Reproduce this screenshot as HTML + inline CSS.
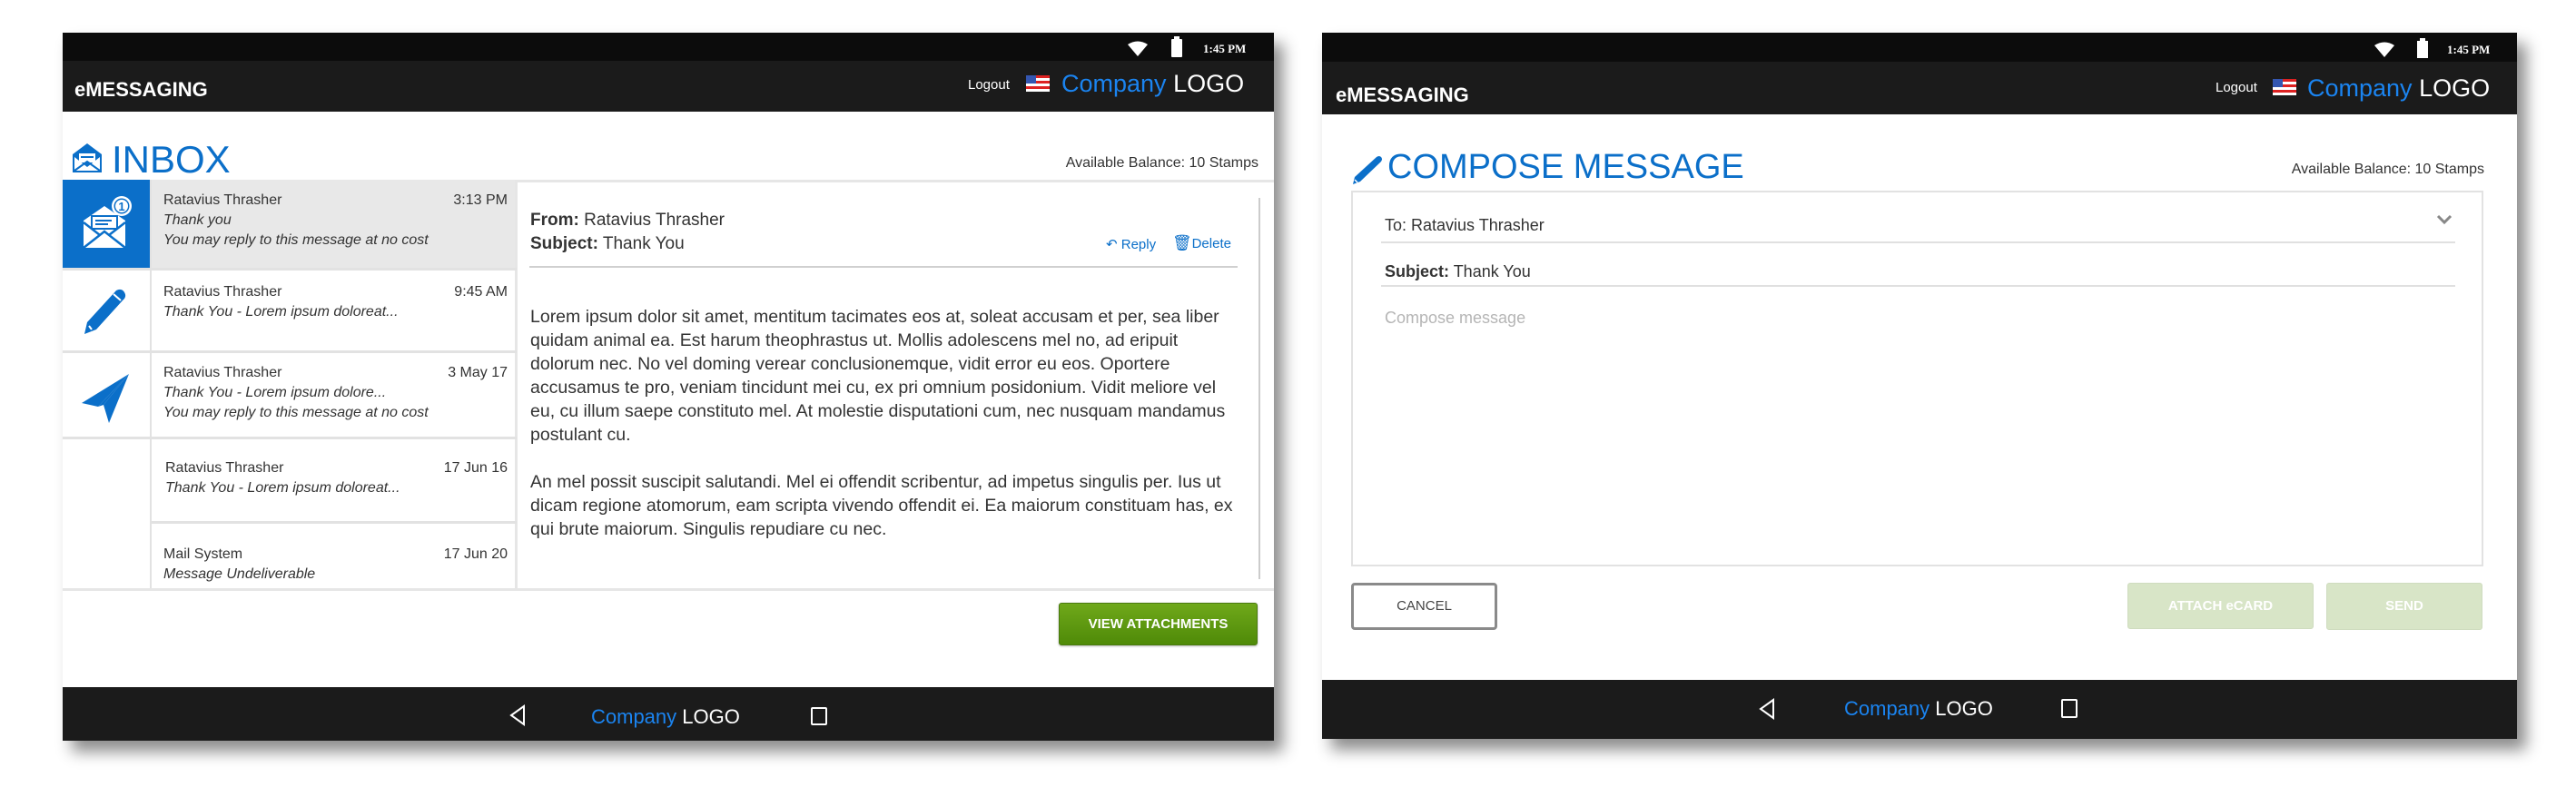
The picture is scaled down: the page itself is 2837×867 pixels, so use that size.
<!DOCTYPE html>
<html><head><meta charset="utf-8"><style>
*{margin:0;padding:0;box-sizing:border-box}
body{width:2837px;height:867px;background:#fff;position:relative;overflow:hidden;font-family:"Liberation Sans",sans-serif;color:#333}
.a{position:absolute;white-space:nowrap}
.dev{position:absolute;background:#fff;box-shadow:10px 12px 16px rgba(0,0,0,.45)}
.sb{position:absolute;left:0;right:0;top:0;height:31px;background:#0c0c0c}
.hd{position:absolute;left:0;right:0;background:#1b1b1b}
.bb{position:absolute;left:0;right:0;background:#1b1b1b}
.blue{color:#0b6fc9}
.t{font-size:17px;color:#333}
.i{font-style:italic}
</style></head><body>

<!-- LEFT DEVICE -->
<div class="dev" style="left:69px;top:36px;width:1334px;height:780px">
 <div class="sb"></div>
 <div class="hd" style="top:31px;height:56px"></div>
 <div class="bb" style="top:721px;height:59px"></div>
</div>
<svg class="a" style="left:1241px;top:45px" width="24" height="18" viewBox="0 0 24 18"><path d="M1 4 Q12 -3 23 4 L12 17Z" fill="#fff"/></svg>
<div class="a" style="left:1290px;top:43px;width:12px;height:20px;background:#fff;border-radius:1px"></div>
<div class="a" style="left:1293px;top:40px;width:6px;height:4px;background:#fff"></div>
<div class="a" style="left:1325px;top:46px;font-size:13px;font-weight:bold;color:#fff;font-family:'Liberation Serif',serif">1:45 PM</div>
<div class="a" style="left:82px;top:86px;font-size:22px;font-weight:bold;color:#fff">eMESSAGING</div>
<div class="a" style="left:1066px;top:85px;font-size:15px;color:#fff">Logout</div>
<svg class="a" style="left:1130px;top:83px" width="26" height="18" viewBox="0 0 26 18"><rect width="26" height="18" fill="#fff"/><rect y="0" width="26" height="3" fill="#d22"/><rect y="6" width="26" height="3" fill="#d22"/><rect y="12" width="26" height="3" fill="#d22"/><rect width="11" height="9" fill="#3456b0"/></svg>
<div class="a" style="left:1169px;top:77px;font-size:27px"><span style="color:#1b84f0">Company</span> <span style="color:#fff">LOGO</span></div>
<svg class="a" style="left:79px;top:157px" width="34" height="34" viewBox="0 0 34 34"><path d="M17 1 L33 13 L33 33 L1 33 L1 13Z" fill="#0b6fc9"/><rect x="8" y="12" width="18" height="10" fill="#fff"/><rect x="10" y="15" width="14" height="2" fill="#0b6fc9"/><path d="M3 16 L17 27 L31 16 L31 31 L3 31Z" fill="#fff"/><path d="M3 31 L17 21 L31 31" stroke="#0b6fc9" stroke-width="2" fill="none"/></svg>
<div class="a blue" style="left:123px;top:152px;font-size:42px">INBOX</div>
<div class="a t" style="right:1451px;top:171px;font-size:16px">Available Balance: 10 Stamps</div>
<div class="a" style="left:69px;top:198px;width:96px;height:97px;background:#0b6fc9"></div>
<svg class="a" style="left:90px;top:215px" width="56" height="60" viewBox="0 0 56 60"><path d="M2 28 L25 12 L48 28 L48 58 L2 58Z" fill="#fff"/><rect x="10" y="22" width="30" height="16" fill="#0b6fc9"/><rect x="12" y="24" width="26" height="12" fill="#fff"/><rect x="15" y="27" width="18" height="2" fill="#0b6fc9"/><rect x="15" y="31" width="14" height="2" fill="#0b6fc9"/><path d="M2 58 L25 40 L48 58" stroke="#0b6fc9" stroke-width="2.5" fill="none"/><path d="M2 30 L20 44 M48 30 L30 44" stroke="#0b6fc9" stroke-width="2.5"/><circle cx="44" cy="12" r="11" fill="#fff"/><circle cx="44" cy="12" r="8.5" fill="#0b6fc9"/><circle cx="44" cy="12" r="7" fill="#fff"/><text x="44" y="17" font-size="13" font-weight="bold" text-anchor="middle" fill="#0b6fc9" font-family="Liberation Sans">1</text></svg>
<svg class="a" style="left:90px;top:318px" width="50" height="52" viewBox="0 0 50 52"><path d="M38 2 Q44 -1 47 4 Q50 9 45 13 L16 45 L3 50 L6 37Z" fill="#0b6fc9"/><path d="M8 41 L11 45" stroke="#fff" stroke-width="2"/><path d="M35 6 L43 13" stroke="#fff" stroke-width="2"/></svg>
<svg class="a" style="left:88px;top:410px" width="58" height="58" viewBox="0 0 58 58"><path d="M54 2 L2 34 L20 38 Z" fill="#0b6fc9"/><path d="M54 2 L26 36 L32 56 Z" fill="#0b6fc9"/><path d="M54 2 L20 38 L26 36 Z" fill="#0b6fc9"/></svg>
<div class="a" style="left:165px;top:198px;width:404px;height:97px;background:#e8e8e8"></div>
<div class="a" style="left:165px;top:198px;width:2px;height:452px;background:#e2e2e2"></div>
<div class="a" style="left:567px;top:198px;width:3px;height:452px;background:#e6e6e6"></div>
<div class="a" style="left:69px;top:295px;width:500px;height:3px;background:#e2e2e2"></div>
<div class="a" style="left:69px;top:386px;width:500px;height:3px;background:#e2e2e2"></div>
<div class="a" style="left:69px;top:481px;width:500px;height:3px;background:#e2e2e2"></div>
<div class="a" style="left:165px;top:574px;width:404px;height:3px;background:#e2e2e2"></div>
<div class="a" style="left:69px;top:648px;width:1334px;height:3px;background:#e6e6e6"></div>
<div class="a" style="left:569px;top:198px;width:834px;height:3px;background:#e6e6e6"></div>

<div class="a t" style="left:180px;top:212px;font-size:16px">Ratavius Thrasher</div>
<div class="a t" style="right:2278px;top:212px;font-size:16px">3:13 PM</div>
<div class="a t i" style="left:180px;top:234px;font-size:16px">Thank you</div>
<div class="a t i" style="left:180px;top:256px;font-size:16px">You may reply to this message at no cost</div>
<div class="a t" style="left:180px;top:313px;font-size:16px">Ratavius Thrasher</div>
<div class="a t" style="right:2278px;top:313px;font-size:16px">9:45 AM</div>
<div class="a t i" style="left:180px;top:335px;font-size:16px">Thank You - Lorem ipsum doloreat...</div>
<div class="a t" style="left:180px;top:402px;font-size:16px">Ratavius Thrasher</div>
<div class="a t" style="right:2278px;top:402px;font-size:16px">3 May 17</div>
<div class="a t i" style="left:180px;top:424px;font-size:16px">Thank You - Lorem ipsum dolore...</div>
<div class="a t i" style="left:180px;top:446px;font-size:16px">You may reply to this message at no cost</div>
<div class="a t" style="left:182px;top:507px;font-size:16px">Ratavius Thrasher</div>
<div class="a t" style="right:2278px;top:507px;font-size:16px">17 Jun 16</div>
<div class="a t i" style="left:182px;top:529px;font-size:16px">Thank You - Lorem ipsum doloreat...</div>
<div class="a t" style="left:180px;top:602px;font-size:16px">Mail System</div>
<div class="a t" style="right:2278px;top:602px;font-size:16px">17 Jun 20</div>
<div class="a t i" style="left:180px;top:624px;font-size:16px">Message Undeliverable</div>

<div class="a" style="left:1386px;top:218px;width:2px;height:420px;background:#ccc"></div>
<div class="a t" style="left:584px;top:232px;font-size:19px"><b>From:</b> Ratavius Thrasher</div>
<div class="a t" style="left:584px;top:258px;font-size:19px"><b>Subject:</b> Thank You</div>
<div class="a blue" style="left:1218px;top:260px;font-size:15px">&#8630; Reply</div>
<div class="a blue" style="left:1291px;top:258px;font-size:15px"><span style="font-size:17px">&#128465;</span>Delete</div>
<div class="a" style="left:583px;top:293px;width:780px;height:2px;background:#d0d0d0"></div>
<div class="a t" style="left:584px;top:336px;font-size:19.5px;line-height:26px;color:#333">Lorem ipsum dolor sit amet, mentitum tacimates eos at, soleat accusam et per, sea liber<br>quidam animal ea. Est harum theophrastus ut. Mollis adolescens mel no, ad eripuit<br>dolorum nec. No vel doming verear conclusionemque, vidit error eu eos. Oportere<br>accusamus te pro, veniam tincidunt mei cu, ex pri omnium posidonium. Vidit meliore vel<br>eu, cu illum saepe constituto mel. At molestie disputationi cum, nec nusquam mandamus<br>postulant cu.</div>
<div class="a t" style="left:584px;top:518px;font-size:19.5px;line-height:26px;color:#333">An mel possit suscipit salutandi. Mel ei offendit scribentur, ad impetus singulis per. Ius ut<br>dicam regione atomorum, eam scripta vivendo offendit ei. Ea maiorum constituam has, ex<br>qui brute maiorum. Singulis repudiare cu nec.</div>
<div class="a" style="left:1166px;top:664px;width:219px;height:47px;background:linear-gradient(#6fa81a,#4f8a08);border:1px solid #4a7a10;border-radius:3px;box-shadow:0 1px 2px rgba(0,0,0,.3);color:#fff;font-size:15px;font-weight:bold;text-align:center;line-height:45px">VIEW ATTACHMENTS</div>
<svg class="a" style="left:560px;top:776px" width="20" height="24" viewBox="0 0 20 24"><path d="M17 2 L3 12 L17 22Z" fill="none" stroke="#fff" stroke-width="2"/></svg>
<div class="a" style="left:651px;top:777px;font-size:22px"><span style="color:#1b84f0">Company</span> <span style="color:#fff">LOGO</span></div>
<div class="a" style="left:893px;top:779px;width:18px;height:20px;border:2px solid #fff;border-radius:2px"></div>

<!-- RIGHT DEVICE -->
<div class="dev" style="left:1456px;top:36px;width:1316px;height:778px">
 <div class="sb" style="height:32px"></div>
 <div class="hd" style="top:32px;height:58px"></div>
 <div class="bb" style="top:713px;height:65px"></div>
</div>
<svg class="a" style="left:2614px;top:46px" width="24" height="18" viewBox="0 0 24 18"><path d="M1 4 Q12 -3 23 4 L12 17Z" fill="#fff"/></svg>
<div class="a" style="left:2662px;top:45px;width:12px;height:19px;background:#fff"></div>
<div class="a" style="left:2665px;top:42px;width:6px;height:4px;background:#fff"></div>
<div class="a" style="left:2695px;top:47px;font-size:13px;font-weight:bold;color:#fff;font-family:'Liberation Serif',serif">1:45 PM</div>
<div class="a" style="left:1471px;top:92px;font-size:22px;font-weight:bold;color:#fff">eMESSAGING</div>
<div class="a" style="left:2440px;top:88px;font-size:15px;color:#fff">Logout</div>
<svg class="a" style="left:2503px;top:87px" width="26" height="18" viewBox="0 0 26 18"><rect width="26" height="18" fill="#fff"/><rect y="0" width="26" height="3" fill="#d22"/><rect y="6" width="26" height="3" fill="#d22"/><rect y="12" width="26" height="3" fill="#d22"/><rect width="11" height="9" fill="#3456b0"/></svg>
<div class="a" style="left:2541px;top:82px;font-size:27px"><span style="color:#1b84f0">Company</span> <span style="color:#fff">LOGO</span></div>

<svg class="a" style="left:1488px;top:170px" width="36" height="34" viewBox="0 0 36 34"><path d="M28 3 Q31 1 33 3 Q35 5 33 8 L10 30 L2 33 L4 25Z" fill="#0b6fc9"/><path d="M4 28 L7 31" stroke="#fff" stroke-width="1.5"/></svg>
<div class="a blue" style="left:1528px;top:163px;font-size:38px">COMPOSE MESSAGE</div>
<div class="a t" style="right:101px;top:178px;font-size:16px">Available Balance: 10 Stamps</div>
<div class="a" style="left:1488px;top:210px;width:1247px;height:414px;border:2px solid #e2e2e2"></div>
<div class="a t" style="left:1525px;top:238px;font-size:18px">To: Ratavius Thrasher</div>
<svg class="a" style="left:2683px;top:236px" width="18" height="12" viewBox="0 0 18 12"><path d="M2 2 L9 9 L16 2" stroke="#888" stroke-width="3" fill="none"/></svg>
<div class="a" style="left:1521px;top:266px;width:1183px;height:2px;background:#e0e0e0"></div>
<div class="a t" style="left:1525px;top:289px;font-size:18px"><b>Subject:</b> Thank You</div>
<div class="a" style="left:1521px;top:314px;width:1183px;height:2px;background:#e0e0e0"></div>
<div class="a" style="left:1525px;top:340px;font-size:18px;color:#b5b5b5">Compose message</div>
<div class="a" style="left:1488px;top:642px;width:161px;height:52px;border:3px solid #8a8a8a;border-radius:4px;font-size:15px;text-align:center;line-height:46px;color:#444">CANCEL</div>
<div class="a" style="left:2343px;top:642px;width:205px;height:51px;background:#d8e5c7;border:1px solid #cfdcbf;border-radius:3px;font-size:15px;font-weight:bold;text-align:center;line-height:49px;color:#fff">ATTACH eCARD</div>
<div class="a" style="left:2562px;top:642px;width:172px;height:52px;background:#d8e5c7;border:1px solid #cfdcbf;border-radius:3px;font-size:15px;font-weight:bold;text-align:center;line-height:50px;color:#fff">SEND</div>
<svg class="a" style="left:1936px;top:769px" width="20" height="24" viewBox="0 0 20 24"><path d="M17 2 L3 12 L17 22Z" fill="none" stroke="#fff" stroke-width="2"/></svg>
<div class="a" style="left:2031px;top:768px;font-size:22px"><span style="color:#1b84f0">Company</span> <span style="color:#fff">LOGO</span></div>
<div class="a" style="left:2270px;top:770px;width:18px;height:21px;border:2px solid #fff;border-radius:2px"></div>
</body></html>
